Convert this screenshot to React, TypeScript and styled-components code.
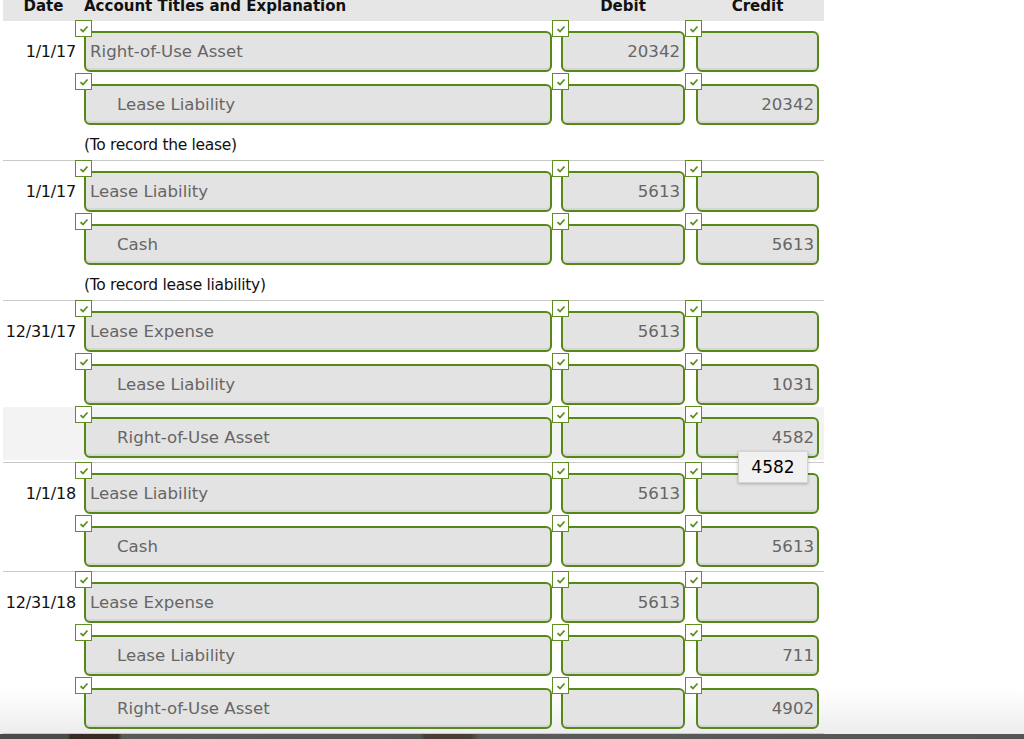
import React from "react";
import styled, { createGlobalStyle } from "styled-components";

const GlobalStyle = createGlobalStyle`
  html, body { margin: 0; padding: 0; background: #ffffff; }
  body { font-family: "DejaVu Sans", Verdana, sans-serif; }
  * { box-sizing: border-box; }
`;

const Page = styled.div`
  position: relative;
  width: 1024px;
  height: 739px;
  overflow: hidden;
  display: flex;
  flex-direction: column;
  background: linear-gradient(to bottom, #ffffff 0, #ffffff 688px, #ededed 733px);
`;

const Sheet = styled.div`
  width: 821px;
  margin-left: 3px;
`;

const Grid = styled.div`
  display: grid;
  grid-template-columns: 81px 468px 133px 134px;
`;

const HeaderRow = styled(Grid)`
  height: 21px;
  background: #e6e6e6;
  overflow: hidden;
  width: 821px;
`;

const HeadCell = styled.div<{ $align: "left" | "center"; $pad?: number }>`
  font-weight: bold;
  font-size: 15px;
  color: #111;
  line-height: 15px;
  margin-top: -1px;
  text-align: ${(p) => p.$align};
  padding-left: ${(p) => p.$pad ?? 0}px;
`;

const Entry = styled.div<{ $tail: number }>`
  border-bottom: 1px solid #c9c9c9;
  padding-bottom: ${(p) => p.$tail}px;
  width: 821px;
`;

const Row = styled(Grid)<{ $hl?: boolean }>`
  height: 53px;
  padding-top: 10px;
  background: ${(p) => (p.$hl ? "#f3f3f3" : "transparent")};
`;

const DateCell = styled.div`
  height: 41px;
  display: flex;
  align-items: center;
  justify-content: flex-end;
  padding-right: 8px;
  font-size: 16px;
  color: #111;
  letter-spacing: -0.2px;
`;

const Cell = styled.div<{ $pad: number }>`
  position: relative;
  padding-left: ${(p) => p.$pad}px;
`;

const Check = styled.div<{ $left: number }>`
  position: absolute;
  top: -11px;
  left: ${(p) => p.$left}px;
  width: 17px;
  height: 17px;
  background: #fff;
  border: 1.5px solid #5f8e24;
  display: flex;
  align-items: center;
  justify-content: center;
  z-index: 2;
`;

const Field = styled.div<{ $right?: boolean; $indent?: boolean }>`
  height: 41px;
  background: #e3e3e3;
  border: 2px solid #578718;
  border-bottom-width: 2.5px;
  border-radius: 6px;
  box-shadow: inset 0 -2px 0 #d6d6d6;
  display: flex;
  align-items: center;
  justify-content: ${(p) => (p.$right ? "flex-end" : "flex-start")};
  padding: 0 ${(p) => (p.$right ? 3 : 4)}px 0 ${(p) => (p.$indent ? 31 : 4)}px;
  font-size: 16.6px;
  color: #666;
  white-space: nowrap;
`;

const Note = styled.div`
  height: 33px;
  padding-left: 81px;
  display: flex;
  align-items: center;
  padding-top: 3px;
  font-size: 15.5px;
  color: #111;
  letter-spacing: -0.3px;
`;

const Tip = styled.div`
  position: absolute;
  left: 738px;
  top: 451px;
  width: 70px;
  height: 32px;
  background: #f1f1f1;
  border: 1px solid #d4d4d4;
  box-shadow: 0 1px 3px rgba(0, 0, 0, 0.25);
  display: flex;
  align-items: center;
  justify-content: center;
  font-size: 17px;
  color: #000;
  z-index: 5;
`;

const Spacer = styled.div`
  flex: 1;
`;

const Footer = styled.div`
  height: 6px;
  background: linear-gradient(
    to right,
    #4b4b4b 0,
    #4b4b4b 68px,
    #3a2a26 70px,
    #3a2a26 118px,
    #5a5a5a 122px,
    #555 420px,
    #4a3c36 425px,
    #4a3c36 470px,
    #5b5b5b 480px,
    #555 1024px
  );
`;

const Tick = () => (
  <svg width="10" height="8" viewBox="0 0 10 8">
    <polyline points="1.5,4.2 4,6.5 8.5,1.5" fill="none" stroke="#5b8f22" strokeWidth="1.8" />
  </svg>
);

type Line = { acct: string; debit?: string; credit?: string; indent?: boolean; hl?: boolean };
type Item = { date: string; rows: Line[]; note?: string };

const entries: Item[] = [
  {
    date: "1/1/17",
    rows: [
      { acct: "Right-of-Use Asset", debit: "20342" },
      { acct: "Lease Liability", credit: "20342", indent: true },
    ],
    note: "(To record the lease)",
  },
  {
    date: "1/1/17",
    rows: [
      { acct: "Lease Liability", debit: "5613" },
      { acct: "Cash", credit: "5613", indent: true },
    ],
    note: "(To record lease liability)",
  },
  {
    date: "12/31/17",
    rows: [
      { acct: "Lease Expense", debit: "5613" },
      { acct: "Lease Liability", credit: "1031", indent: true },
      { acct: "Right-of-Use Asset", credit: "4582", indent: true, hl: true },
    ],
  },
  {
    date: "1/1/18",
    rows: [
      { acct: "Lease Liability", debit: "5613" },
      { acct: "Cash", credit: "5613", indent: true },
    ],
  },
  {
    date: "12/31/18",
    rows: [
      { acct: "Lease Expense", debit: "5613" },
      { acct: "Lease Liability", credit: "711", indent: true },
      { acct: "Right-of-Use Asset", credit: "4902", indent: true },
    ],
  },
];

export default function App() {
  return (
    <Page>
      <GlobalStyle />
      <Sheet>
        <HeaderRow>
          <HeadCell $align="center">Date</HeadCell>
          <HeadCell $align="left">Account Titles and Explanation</HeadCell>
          <HeadCell $align="center" $pad={9}>Debit</HeadCell>
          <HeadCell $align="center" $pad={11}>Credit</HeadCell>
        </HeaderRow>
        {entries.map((e, ei) => (
          <Entry key={ei} $tail={e.note ? 0 : 2}>
            {e.rows.map((r, ri) => (
              <Row key={ri} $hl={r.hl}>
                <DateCell>{ri === 0 ? e.date : ""}</DateCell>
                <Cell $pad={0}>
                  <Check $left={-9}><Tick /></Check>
                  <Field $indent={r.indent}>{r.acct}</Field>
                </Cell>
                <Cell $pad={9}>
                  <Check $left={0}><Tick /></Check>
                  <Field $right>{r.debit ?? ""}</Field>
                </Cell>
                <Cell $pad={11}>
                  <Check $left={0}><Tick /></Check>
                  <Field $right>{r.credit ?? ""}</Field>
                </Cell>
              </Row>
            ))}
            {e.note && <Note>{e.note}</Note>}
          </Entry>
        ))}
      </Sheet>
      <Tip>4582</Tip>
      <Spacer />
      <Footer />
    </Page>
  );
}
